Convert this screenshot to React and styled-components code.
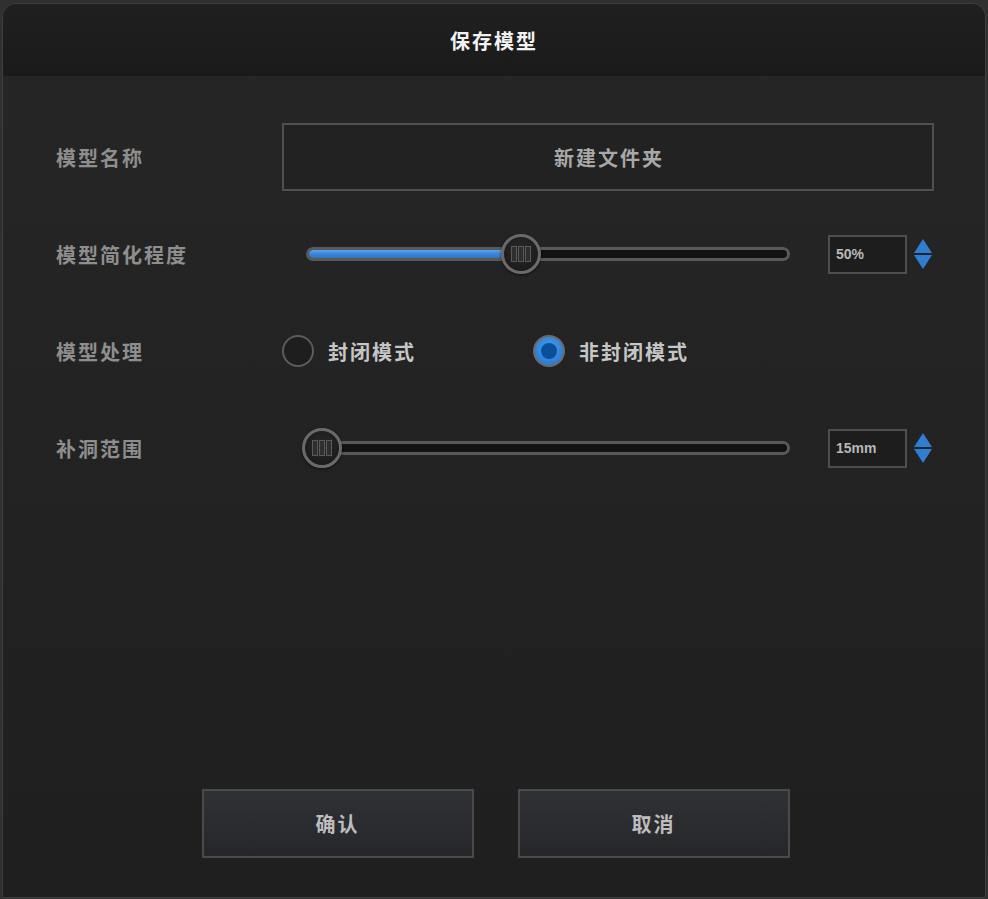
import React, { useState } from "react"
import styled, { createGlobalStyle } from "styled-components"

const GlobalStyle = createGlobalStyle`
  html, body {
    margin: 0;
    padding: 0;
    background: #303030;
  }
  body {
    font-family: "Noto Sans CJK SC", "Noto Sans", "Liberation Sans", sans-serif;
  }
`

const Page = styled.div`
  width: 988px;
  height: 899px;
  padding: 3px 2px 1px 2px;
  box-sizing: border-box;
  display: flex;
`

const Dialog = styled.div`
  flex: 1;
  display: flex;
  flex-direction: column;
  border: 1px solid #3f3f3f;
  border-radius: 14px 14px 0 0;
  overflow: hidden;
  background: linear-gradient(to bottom, #262626 0%, #1f1f1f 100%);
`

const TitleBar = styled.div`
  height: 72px;
  display: flex;
  align-items: center;
  justify-content: center;
  background: linear-gradient(to bottom, #202020, #1a1a1a);
  color: #f2f2f2;
  font-size: 20px;
  font-weight: 700;
  letter-spacing: 2px;
`

const Body = styled.div`
  flex: 1;
  display: flex;
  flex-direction: column;
  padding: 47px 51px 0 53px;
  gap: 29px;
`

const Row = styled.div`
  display: flex;
  align-items: center;
  height: 68px;
`

const Label = styled.div`
  width: 226px;
  flex-shrink: 0;
  color: #8e8e8e;
  font-size: 20px;
  font-weight: 700;
  letter-spacing: 2px;
`

const NameInput = styled.div`
  flex: 1;
  height: 68px;
  box-sizing: border-box;
  border: 2px solid #505050;
  background: #222;
  display: flex;
  align-items: center;
  justify-content: center;
  padding-left: 2px;
  color: #a8a8a8;
  font-size: 20px;
  font-weight: 700;
  letter-spacing: 2px;
`

const Control = styled.div`
  flex: 1;
  display: flex;
  align-items: center;
`

const Track = styled.div`
  position: relative;
  margin-left: 24px;
  width: 484px;
  height: 14px;
  box-sizing: border-box;
  border: 3px solid #595959;
  border-radius: 7px;
  background: #121212;
`

const Fill = styled.div`
  height: 100%;
  border-radius: 4px;
  background: linear-gradient(to bottom, #5aa3ef 0%, #3c87da 45%, #2f74c4 100%);
`

const Thumb = styled.div`
  position: absolute;
  top: 50%;
  width: 40px;
  height: 40px;
  margin-left: -20px;
  margin-top: -20px;
  box-sizing: border-box;
  border-radius: 50%;
  border: 3px solid #6a6a6a;
  background: radial-gradient(circle at 50% 40%, #2a2a2a, #161616);
  box-shadow: 0 1px 3px rgba(0, 0, 0, 0.6);
  display: flex;
  align-items: center;
  justify-content: center;
  gap: 1px;
`

const Grip = styled.span`
  width: 6px;
  height: 16px;
  box-sizing: border-box;
  border: 1px solid #595959;
  background: #2e2e2e;
`

const ValueBox = styled.div`
  margin-left: 38px;
  width: 79px;
  height: 39px;
  box-sizing: border-box;
  border: 2px solid #4e4e4e;
  background: #1d1d1d;
  display: flex;
  align-items: center;
  padding-left: 6px;
  color: #b8b8b8;
  font-family: "Liberation Sans", Arial, sans-serif;
  font-size: 14px;
  font-weight: 700;
`

const Spinner = styled.div`
  margin-left: 7px;
  display: flex;
  flex-direction: column;
  gap: 2px;
`

const Arrow = styled.span`
  width: 0;
  height: 0;
  border-left: 9px solid transparent;
  border-right: 9px solid transparent;
  border-bottom: ${(p) => (p.$down ? "none" : "14px solid #2f7ed2")};
  border-top: ${(p) => (p.$down ? "14px solid #2f7ed2" : "none")};
`

const RadioOption = styled.div`
  display: flex;
  align-items: center;
  gap: 14px;
  width: ${(p) => p.$width || "auto"};
  cursor: pointer;
`

const RadioCircle = styled.span`
  width: 32px;
  height: 32px;
  box-sizing: border-box;
  border-radius: 50%;
  border: 2px solid ${(p) => (p.$checked ? "#6b6b6b" : "#5c5c5c")};
  background: ${(p) => (p.$checked ? "radial-gradient(circle at 50% 40%, #4aa0f2, #1f6fc6)" : "#1e1e1e")};
  display: flex;
  align-items: center;
  justify-content: center;

  &::after {
    content: "";
    display: ${(p) => (p.$checked ? "block" : "none")};
    width: 16px;
    height: 16px;
    border-radius: 50%;
    background: #0b4f97;
  }
`

const RadioText = styled.span`
  color: #c6c6c6;
  font-size: 20px;
  font-weight: 700;
  letter-spacing: 2px;
`

const Footer = styled.div`
  display: flex;
  justify-content: center;
  gap: 44px;
  padding: 0 0 39px 0;
  margin-left: 3px;
`

const Button = styled.button`
  width: 272px;
  height: 69px;
  box-sizing: border-box;
  border: 2px solid #4a4a4a;
  background: linear-gradient(to bottom, #303134, #26272a);
  color: #bdbdbd;
  font-family: "Noto Sans CJK SC", "Noto Sans", sans-serif;
  font-size: 20px;
  font-weight: 700;
  letter-spacing: 2px;
  cursor: pointer;
`

function Slider({ percent }) {
  return (
    <Track>
      <Fill style={{ width: `${percent}%` }} />
      <Thumb style={{ left: `${Math.max(percent, 2.7)}%` }}>
        <Grip />
        <Grip />
        <Grip />
      </Thumb>
    </Track>
  )
}

export default function App() {
  const [mode, setMode] = useState("open")

  return (
    <>
      <GlobalStyle />
      <Page>
        <Dialog>
          <TitleBar>保存模型</TitleBar>
          <Body>
            <Row>
              <Label>模型名称</Label>
              <NameInput>新建文件夹</NameInput>
            </Row>
            <Row>
              <Label>模型简化程度</Label>
              <Control>
                <Slider percent={44.4} />
                <ValueBox>50%</ValueBox>
                <Spinner>
                  <Arrow />
                  <Arrow $down />
                </Spinner>
              </Control>
            </Row>
            <Row>
              <Label>模型处理</Label>
              <Control>
                <RadioOption $width="251px" onClick={() => setMode("closed")}>
                  <RadioCircle $checked={mode === "closed"} />
                  <RadioText>封闭模式</RadioText>
                </RadioOption>
                <RadioOption onClick={() => setMode("open")}>
                  <RadioCircle $checked={mode === "open"} />
                  <RadioText>非封闭模式</RadioText>
                </RadioOption>
              </Control>
            </Row>
            <Row>
              <Label>补洞范围</Label>
              <Control>
                <Slider percent={0} />
                <ValueBox>15mm</ValueBox>
                <Spinner>
                  <Arrow />
                  <Arrow $down />
                </Spinner>
              </Control>
            </Row>
          </Body>
          <Footer>
            <Button>确认</Button>
            <Button>取消</Button>
          </Footer>
        </Dialog>
      </Page>
    </>
  )
}
